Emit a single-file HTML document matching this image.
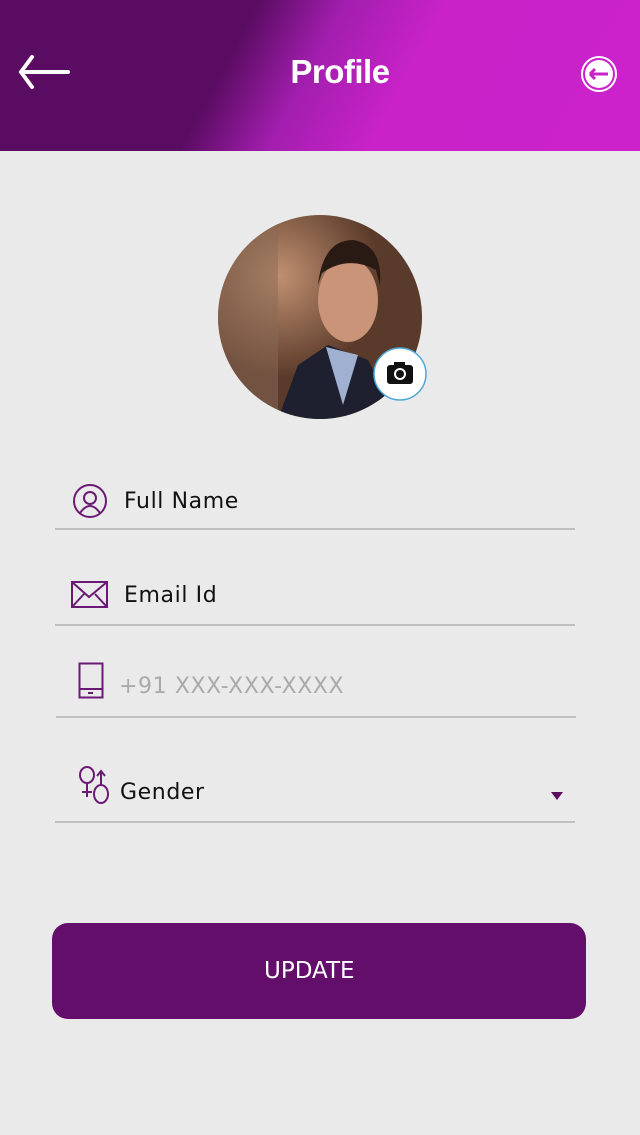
<!DOCTYPE html>
<html><head><meta charset="utf-8"><style>
body{margin:0;width:640px;height:1135px;background:#eaeaea;font-family:"DejaVu Sans","Liberation Sans",sans-serif;position:relative;overflow:hidden}
.hdr{position:absolute;left:0;top:0;width:640px;height:151px;background:linear-gradient(118deg,#5a0c62 0%,#5a0c62 36%,#a21eae 48%,#c822c8 62%,#cc22cc 100%)}
.title{position:absolute;left:0;width:680px;top:53px;text-align:center;color:#fff;font-family:"Liberation Sans",sans-serif;font-weight:bold;font-size:33px;letter-spacing:-0.5px}
.line{position:absolute;height:2px;background:#c0c0c0;left:55px;width:520px}
.t{position:absolute;font-size:22px;color:#111;letter-spacing:0.6px}
.btn{position:absolute;left:52px;top:923px;width:534px;height:96px;background:#640e6c;border-radius:16px;color:#fff;font-size:23px;line-height:96px}
</style></head><body>
<div class="hdr"></div>
<svg style="position:absolute;left:18px;top:54px" width="54" height="36"><path d="M3 18H50M3 18L14 3M3 18L14 33" stroke="#fff" stroke-width="4" fill="none" stroke-linecap="round"/></svg>
<div class="title">Profile</div>
<svg style="position:absolute;left:580px;top:55px" width="38" height="38"><circle cx="19" cy="19" r="17" stroke="#fff" stroke-width="2" fill="none"/><circle cx="19" cy="19" r="14" fill="#fff"/><path d="M10 19H28M10 19L15 14M10 19L15 24" stroke="#c822c8" stroke-width="3" fill="none"/></svg>
<svg style="position:absolute;left:218px;top:215px" width="204" height="204"><defs><clipPath id="c"><circle cx="102" cy="102" r="102"/></clipPath><radialGradient id="bg" cx="0.3" cy="0.3"><stop offset="0" stop-color="#c09070"/><stop offset="1" stop-color="#5a3a2a"/></radialGradient></defs>
<g clip-path="url(#c)"><rect width="204" height="204" fill="url(#bg)"/><rect x="0" y="0" width="60" height="204" fill="#8a6a55" opacity=".5"/>
<path d="M60 204 L80 150 L110 130 L150 145 L180 204Z" fill="#1e2030"/><path d="M108 132 L125 190 L140 140Z" fill="#9fb0d0"/>
<ellipse cx="130" cy="85" rx="30" ry="42" fill="#c99478"/><path d="M100 70 Q105 25 135 25 Q165 30 162 70 L158 55 Q130 40 104 58Z" fill="#2a1a14"/></g></svg>
<svg style="position:absolute;left:373px;top:347px" width="54" height="54"><circle cx="27" cy="27" r="26" fill="#fff" stroke="#4aa8d8" stroke-width="1.5"/><rect x="14" y="18" width="26" height="19" rx="3" fill="#111"/><rect x="21" y="15" width="11" height="5" fill="#111"/><circle cx="27" cy="27" r="6" fill="#fff"/><circle cx="27" cy="27" r="4" fill="#111"/></svg>
<svg style="position:absolute;left:72px;top:483px" width="36" height="36"><circle cx="18" cy="18" r="16" stroke="#6a1a74" stroke-width="2" fill="none"/><circle cx="18" cy="15" r="6" stroke="#6a1a74" stroke-width="2" fill="none"/><path d="M8 30Q18 16 28 30" stroke="#6a1a74" stroke-width="2" fill="none"/></svg>
<div class="t" style="left:124px;top:489px">Full Name</div>
<div class="line" style="top:528px"></div>
<svg style="position:absolute;left:71px;top:581px" width="38" height="28"><rect x="1" y="1" width="35" height="25" stroke="#6a1a74" stroke-width="2" fill="none"/><path d="M1 1L18 16L36 1M1 26L13 13M36 26L24 13" stroke="#6a1a74" stroke-width="2" fill="none"/></svg>
<div class="t" style="left:124px;top:583px">Email Id</div>
<div class="line" style="top:624px"></div>
<svg style="position:absolute;left:78px;top:662px" width="28" height="38"><rect x="1.5" y="1.5" width="23" height="34" stroke="#6a1a74" stroke-width="2" fill="none"/><path d="M1.5 27H24.5M10 31H15" stroke="#6a1a74" stroke-width="2"/></svg>
<div class="t" style="left:119px;top:674px;color:#aaa">+91 XXX-XXX-XXXX</div>
<div class="line" style="top:716px;left:56px"></div>
<svg style="position:absolute;left:78px;top:765px" width="34" height="40"><ellipse cx="9" cy="10" rx="7" ry="8" stroke="#6a1a74" stroke-width="2" fill="none"/><path d="M9 18V32M4 27H14" stroke="#6a1a74" stroke-width="2"/><ellipse cx="23" cy="29" rx="7" ry="9" stroke="#6a1a74" stroke-width="2" fill="none"/><path d="M23 20V7M19 11L23 6L27 11" stroke="#6a1a74" stroke-width="2" fill="none"/></svg>
<div class="t" style="left:120px;top:780px">Gender</div>
<svg style="position:absolute;left:550px;top:791px" width="14" height="10"><path d="M1 1H13L7 9Z" fill="#5a0c62"/></svg>
<div class="line" style="top:821px"></div>
<div class="btn"><span style="position:absolute;left:212px">UPDATE</span></div>
</body></html>
